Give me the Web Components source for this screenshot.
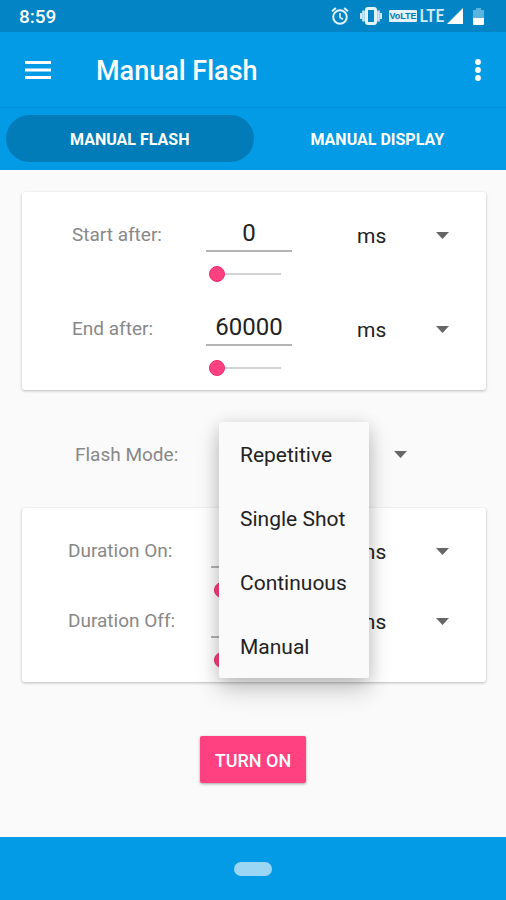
<!DOCTYPE html>
<html lang="en">
<head>
<meta charset="utf-8">
<meta name="viewport" content="width=device-width, initial-scale=1">
<title>Manual Flash</title>
<style>
  html, body { margin: 0; }
  body { font-family: Roboto, "Noto Sans", sans-serif; background: #fafafa; }
</style>
</head>
<body>
<flash-app></flash-app>

<script>
const define = (name, html, setup) => {
  const template = document.createElement('template');
  template.innerHTML = html;
  customElements.define(name, class extends HTMLElement {
    constructor() {
      super();
      this.attachShadow({ mode: 'open' }).append(template.content.cloneNode(true));
    }
    connectedCallback() { if (setup) setup(this, this.shadowRoot); }
  });
};

define('status-bar', `
<style>
  :host { display: flex; align-items: center; height: 32px; padding: 0 22px 0 19px; background: #0284c5; color: #fff; box-sizing: border-box; }
  time { font-size: 19px; font-weight: 500; line-height: 24px; padding-top: 2px; flex: 1; }
  svg { display: block; flex: none; }
  .alarm { margin-right: 11px; }
  .vibrate { margin-right: 7px; }
  .volte { background: #e3f3fc; color: #0277b8; font: 700 9px/12px "Liberation Sans Narrow", "Liberation Sans", sans-serif; width: 28px; text-align: center; border-radius: 1px; margin-right: 4px; }
  .lte { font: 500 18px/24px "Roboto Condensed", "Liberation Sans Narrow", Roboto, sans-serif; width: 22px; margin-right: 4px; color: #d3ebf8; display: flex; justify-content: center; }
  .signal { margin-right: 10px; }
</style>
<time>8:59</time>
<svg class="alarm" width="18" height="18" viewBox="0 0 18 18" fill="none" stroke="#e3f3fc" stroke-width="2"><circle cx="9" cy="10" r="6.8"/><path d="M1 4.2 4.8 1M17 4.2 13.200 1"/><path d="M9 6v4.500l3 1.800" stroke-width="1.600"/></svg>
<svg class="vibrate" width="22" height="18" viewBox="0 0 22 18" fill="#cfe9f7"><rect x="6.500" y="1.500" width="9" height="15" rx="1.500" fill="none" stroke="#e3f3fc" stroke-width="3"/><rect x="2.200" y="3.500" width="2.600" height="11"/><rect x="17.200" y="3.500" width="2.600" height="11"/><rect x="0" y="6" width="2" height="6"/><rect x="20" y="6" width="2" height="6"/></svg>
<span class="volte">VoLTE</span>
<span class="lte">LTE</span>
<svg class="signal" width="16" height="16" viewBox="0 0 16 16"><path d="M16 0v16H0z" fill="#fff"/></svg>
<svg width="11" height="17" viewBox="0 0 11 17"><path d="M3 0h5v2h3v8H0V2h3z" fill="#5cb3de"/><path d="M0 10h11v6q0 1-1 1H1q-1 0-1-1z" fill="#fff"/></svg>
`);

define('app-bar', `
<style>
  :host { display: flex; align-items: center; height: 76px; padding: 0 14px; background: #039be5; color: #fff; box-sizing: border-box; border-bottom: 1px solid #0391d9; }
  h1 { flex: 1; margin: 0; padding-left: 34px; font-size: 27px; font-weight: 500; line-height: 32px; padding-top: 2px; }
  button { border: 0; background: none; padding: 0; width: 48px; height: 48px; display: grid; place-items: center; }
  .more { width: 28px; }
</style>
<button aria-label="Open menu"><svg width="26" height="18" viewBox="0 0 26 18" fill="#fff"><path d="M0 0h26v3H0zM0 7.500h26v3H0zM0 15h26v3H0z"/></svg></button>
<h1><slot></slot></h1>
<button class="more" aria-label="More options"><svg width="6" height="22" viewBox="0 0 6 22" fill="#fff"><circle cx="3" cy="3" r="2.900"/><circle cx="3" cy="11" r="2.900"/><circle cx="3" cy="19" r="2.900"/></svg></button>
`);

define('tab-bar', `
<style>
  :host { display: grid; grid-template-columns: 1fr 1fr; padding: 7px 5px 8px 6px; background: #039be5; }
</style>
<slot></slot>
`);

define('tab-item', `
<style>
  :host { display: block; }
  button { width: 100%; height: 47px; border: 0; border-radius: 24px; background: none; color: #fff; font: 700 16px/24px Roboto, sans-serif; padding: 2px 0 0; }
  :host([selected]) button { background: #027cb8; }
</style>
<button role="tab"><slot></slot></button>
`, (host, root) => root.querySelector('button').setAttribute('aria-selected', host.hasAttribute('selected')));

define('panel-card', `
<style>
  :host { display: flex; flex-direction: column; gap: 26px; margin: 0 20px 0 22px; padding: 22px 37px 14px 50px; background: #fff; border-radius: 3px; box-shadow: 0 1px 3px rgba(0,0,0,.26); }
  :host([dense]) { gap: 2px; padding-left: 46px; }
</style>
<slot></slot>
`);

define('drop-arrow', `
<style>:host { display: block; pointer-events: none; } svg { display: block; }</style>
<svg width="13" height="7" viewBox="0 0 13 7"><path d="M0 0h13L6.500 7z" fill="#666"/></svg>
`);

define('time-row', `
<style>
  :host { display: grid; grid-template-columns: 134fr 86fr 65fr 92fr; }
  :host([dense]) { grid-template-columns: 143fr 81fr 65fr 92fr; }
  label { font-size: 19px; line-height: 42px; color: #888; white-space: nowrap; }
  input[type=text] { display: block; width: 100%; box-sizing: border-box; height: 38px; border: 0; border-bottom: 2px solid #b4b4b4; padding: 2px 0 0; background: none; text-align: center; font: 24px/30px Roboto, sans-serif; color: #222; outline: 0; }
  input[type=range] { display: block; appearance: none; width: 72px; height: 16px; margin: 14px 0 0 3px; background: linear-gradient(#d3d3d3, #d3d3d3) center / 100% 2px no-repeat; outline: 0; }
  input[type=range]::-webkit-slider-thumb { appearance: none; width: 16px; height: 16px; border-radius: 50%; background: #ff4081; border: 1px solid #f0296e; }
  .unit { grid-column: 4; display: grid; align-items: center; height: 42px; }
  select, drop-arrow { grid-area: 1 / 1; }
  drop-arrow { justify-self: end; }
  select { appearance: none; border: 0; background: none; padding: 2px 0 0; width: 100%; font: 21px/28px Roboto, sans-serif; color: #222; outline: 0; }
</style>
<label for="value"></label>
<div class="field">
  <input type="text" id="value" inputmode="numeric">
  <input type="range" min="0" max="100" value="0" aria-label="Adjust value">
</div>
<div class="unit">
  <select aria-label="Unit"><option>ms</option></select>
  <drop-arrow></drop-arrow>
</div>
`, (host, root) => {
  root.querySelector('label').textContent = host.getAttribute('label');
  root.querySelector('#value').value = host.getAttribute('value') || '';
});

define('mode-picker', `
<style>
  :host { display: flex; margin: 32px 20px 22px 75px; height: 64px; align-items: center; }
  label { width: 144px; font-size: 19px; line-height: 28px; padding-top: 2px; color: #888; white-space: nowrap; }
  .box { position: relative; display: grid; align-items: center; width: 188px; height: 64px; }
  select, drop-arrow { grid-area: 1 / 1; }
  drop-arrow { justify-self: end; }
  select { appearance: none; border: 0; background: none; width: 100%; height: 28px; padding: 0 21px; font: 21px/28px Roboto, sans-serif; color: #222; outline: 0; }
  ul { position: absolute; z-index: 2; top: 0; left: 0; width: 150px; margin: 0; padding: 0; list-style: none; background: #fafafa; border-radius: 2px; box-shadow: 0 12px 24px rgba(0,0,0,.2), 0 2px 16px rgba(0,0,0,.13); }
  li button { display: block; width: 100%; height: 64px; padding: 2px 0 0 21px; border: 0; background: none; text-align: left; white-space: nowrap; font: 21px/28px Roboto, sans-serif; color: #222; }
</style>
<label for="mode">Flash Mode:</label>
<div class="box">
  <select id="mode"></select>
  <drop-arrow></drop-arrow>
  <ul role="listbox" aria-label="Flash Mode"></ul>
</div>
`, (host, root) => {
  const select = root.querySelector('select');
  const list = root.querySelector('ul');
  for (const name of host.getAttribute('options').split(',')) {
    select.add(new Option(name));
    const item = document.createElement('li');
    const button = document.createElement('button');
    button.setAttribute('role', 'option');
    button.textContent = name;
    button.onclick = () => { select.value = name; list.hidden = true; };
    item.append(button);
    list.append(item);
  }
});

define('action-button', `
<style>
  :host { display: flex; justify-content: center; margin: 54px 0; }
  button { height: 47px; padding: 2px 15px 0; border: 0; border-radius: 2px; background: #ff4081; color: #fff; font: 500 18px/24px Roboto, sans-serif; box-shadow: 0 1px 3px rgba(0,0,0,.36); }
</style>
<button><slot></slot></button>
`);

define('nav-bar', `
<style>
  :host { display: grid; place-items: center; height: 63px; background: #039be5; }
  button { width: 38px; height: 14px; border: 0; border-radius: 7px; padding: 0; background: #9bd7f5; }
</style>
<button aria-label="Home"></button>
`);

define('flash-app', `
<style>
  :host { display: flex; flex-direction: column; min-height: 100vh; background: #fafafa; }
  main { flex: 1; padding-top: 22px; }
</style>
<status-bar></status-bar>
<app-bar>Manual Flash</app-bar>
<tab-bar role="tablist">
  <tab-item selected>MANUAL FLASH</tab-item>
  <tab-item>MANUAL DISPLAY</tab-item>
</tab-bar>
<main>
  <panel-card>
    <time-row label="Start after:" value="0"></time-row>
    <time-row label="End after:" value="60000"></time-row>
  </panel-card>
  <mode-picker options="Repetitive,Single Shot,Continuous,Manual"></mode-picker>
  <panel-card dense>
    <time-row dense label="Duration On:"></time-row>
    <time-row dense label="Duration Off:"></time-row>
  </panel-card>
  <action-button>TURN ON</action-button>
</main>
<nav-bar></nav-bar>
`);
</script>
</body>
</html>
